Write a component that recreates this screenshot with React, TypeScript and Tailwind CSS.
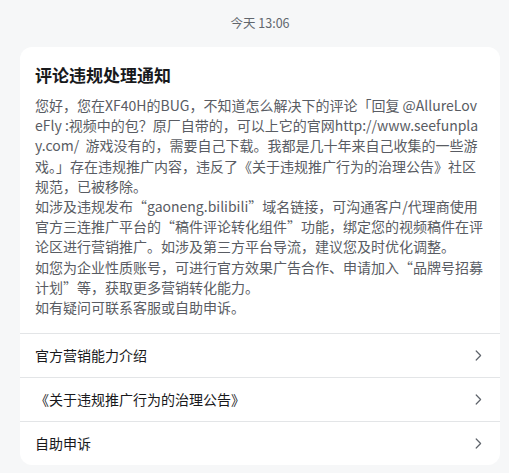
import React from 'react';

const bodyLines = [
  '您好，您在XF40H的BUG，不知道怎么解决下的评论「回复 @AllureLov',
  'eFly :视频中的包？原厂自带的，可以上它的官网http://www.seefunpla',
  'y.com/  游戏没有的，需要自己下载。我都是几十年来自己收集的一些游',
  '戏。」存在违规推广内容，违反了《关于违规推广行为的治理公告》社区',
  '规范，已被移除。',
  '如涉及违规发布“gaoneng.bilibili”域名链接，可沟通客户/代理商使用',
  '官方三连推广平台的“稿件评论转化组件”功能，绑定您的视频稿件在评',
  '论区进行营销推广。如涉及第三方平台导流，建议您及时优化调整。',
  '如您为企业性质账号，可进行官方效果广告合作、申请加入“品牌号招募',
  '计划”等，获取更多营销转化能力。',
  '如有疑问可联系客服或自助申诉。',
];

const links = ['官方营销能力介绍', '《关于违规推广行为的治理公告》', '自助申诉'];

function Chevron() {
  return (
    <svg width="7" height="11" viewBox="0 0 7 11" fill="none" className="shrink-0">
      <path d="M1.2 1 L5.6 5.5 L1.2 10" stroke="#61666d" strokeWidth="1.2" strokeLinecap="round" strokeLinejoin="round" />
    </svg>
  );
}

export default function App() {
  return (
    <div
      className="min-h-[473px] bg-[#f6f7f8] pt-[14px] pb-[8px]"
      style={{ fontFamily: '"Noto Sans CJK SC", "Microsoft YaHei", sans-serif' }}
    >
      <div className="ml-[20px] w-[480px]">
        <div className="text-center text-[12.5px] leading-[18px] text-[#61666d]">今天 13:06</div>

        <div className="mt-[15px] overflow-hidden rounded-[12px] bg-white">
          <div className="px-[15px] pt-[16px] pb-[16px]">
            <h2 className="text-[17px] font-bold leading-[24px] text-[#18191c]">评论违规处理通知</h2>
            <div className="mt-[8px] text-[14px] leading-[20.2px] text-[#595c63]">
              {bodyLines.map((line, i) => (
                <div key={i} className="whitespace-pre">
                  {line}
                </div>
              ))}
            </div>
          </div>

          {links.map((label) => (
            <div
              key={label}
              className="flex h-[44px] items-center justify-between border-t border-[#e3e5e7] pl-[15px] pr-[18px]"
            >
              <span className="text-[14px] text-[#18191c]">{label}</span>
              <Chevron />
            </div>
          ))}
        </div>
      </div>
    </div>
  );
}
